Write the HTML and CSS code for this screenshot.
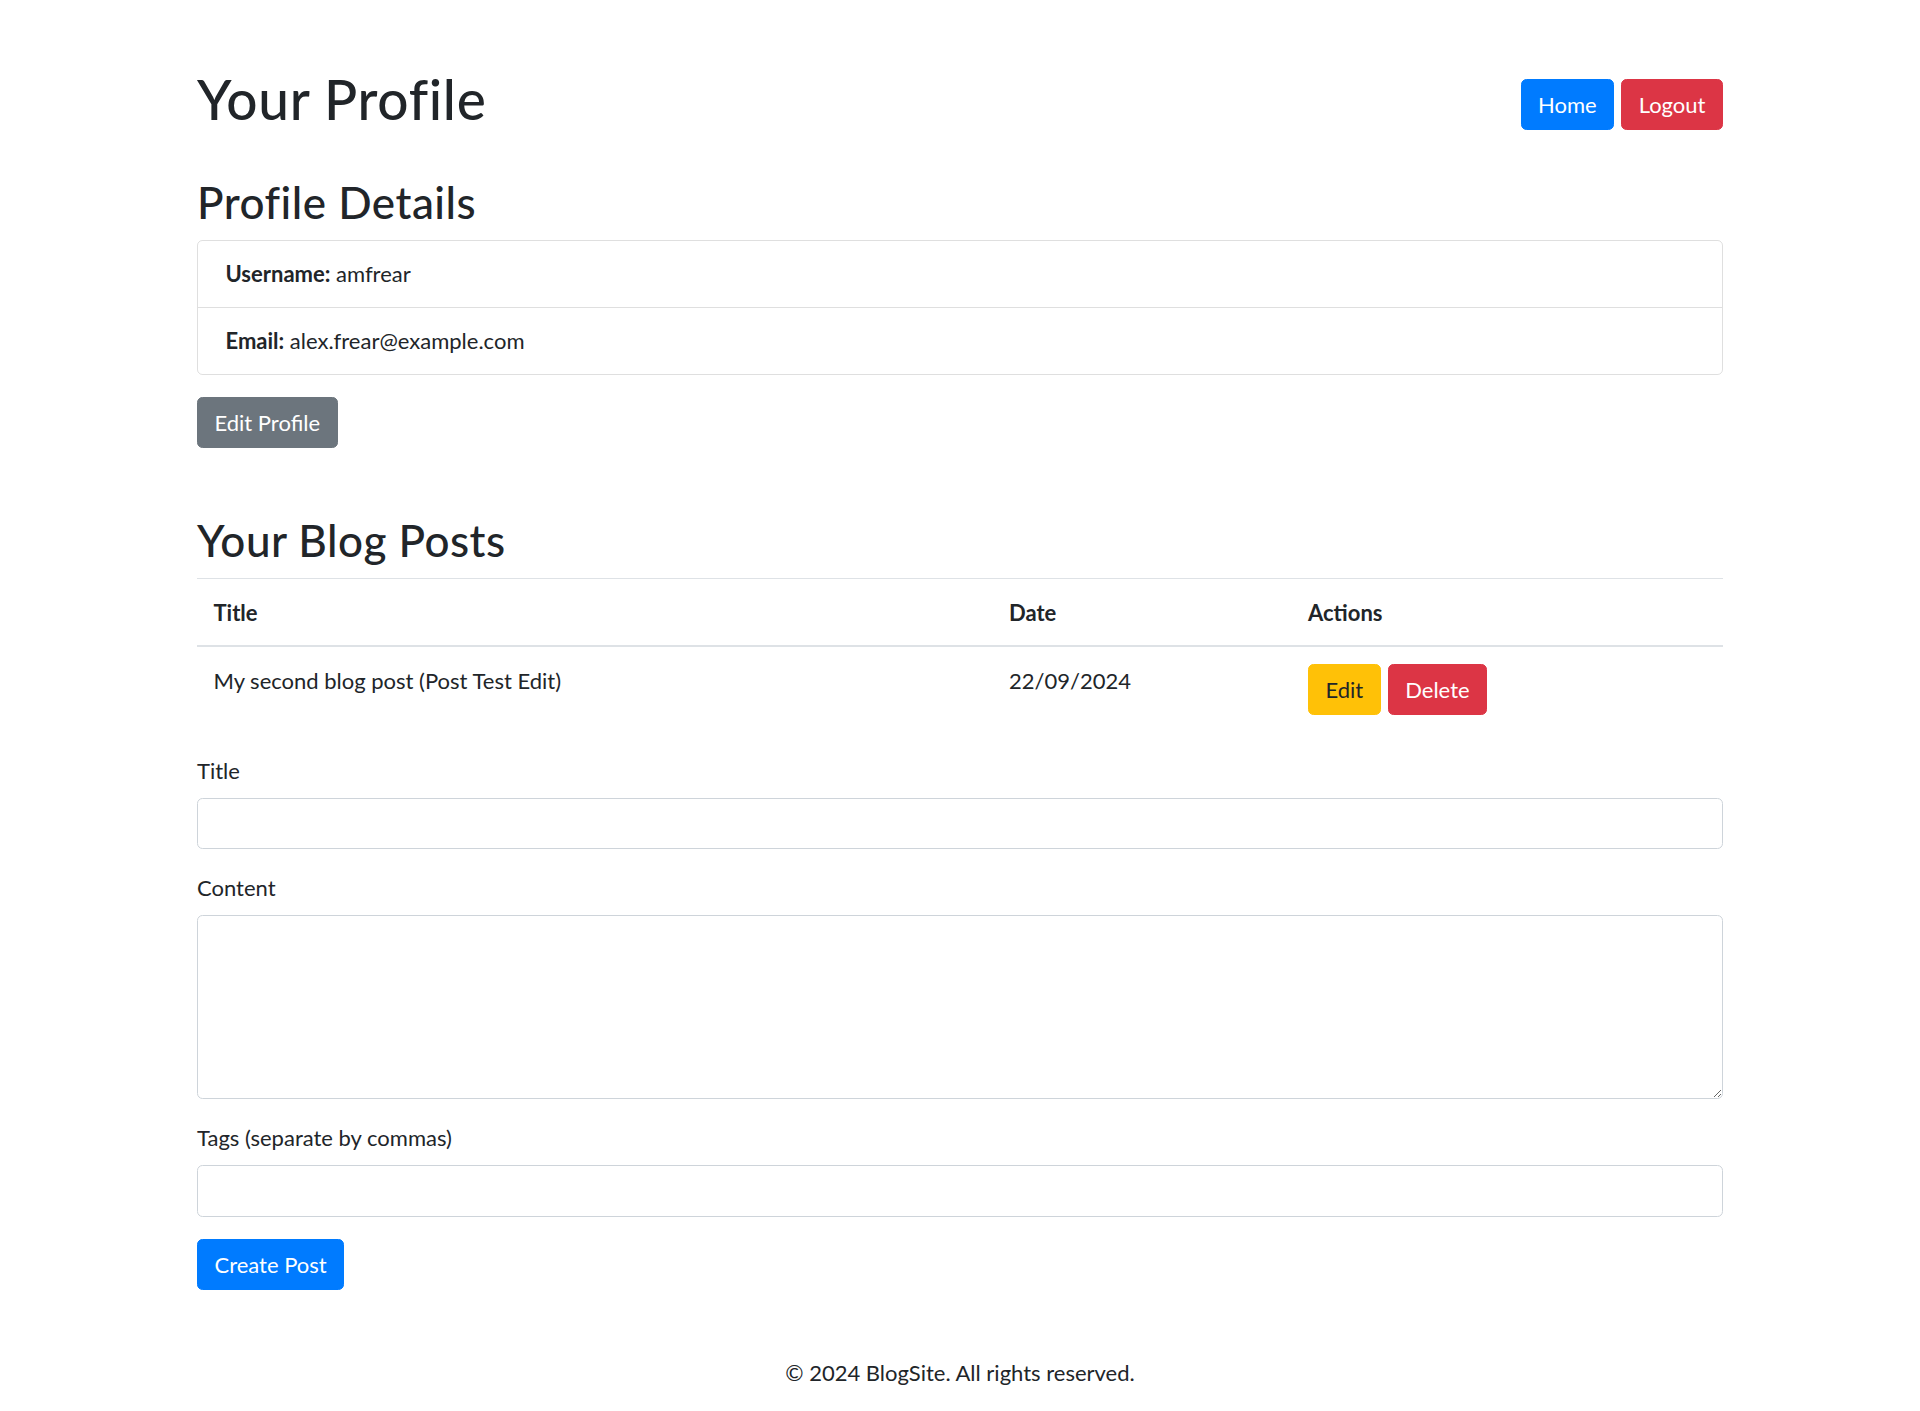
FILE: index.html
```html
<!DOCTYPE html>
<html lang="en">
<head>
<meta charset="utf-8">
<title>Your Profile</title>
<link rel="stylesheet" href="styles.css">
</head>
<body>
<div class="container">
  <div class="page-header">
    <h1 class="title">Your Profile</h1>
    <div class="nav-btns">
      <a class="btn btn-primary" href="#">Home</a>
      <a class="btn btn-danger" href="#">Logout</a>
    </div>
  </div>

  <h2 class="section-title">Profile Details</h2>
  <ul class="list-group">
    <li class="list-group-item"><strong>Username:</strong> amfrear</li>
    <li class="list-group-item"><strong>Email:</strong> alex.frear@example.com</li>
  </ul>
  <a class="btn btn-secondary" href="#">Edit Profile</a>

  <h2 class="section-title section-gap">Your Blog Posts</h2>
  <table class="table">
    <colgroup>
      <col class="col-title">
      <col class="col-date">
      <col class="col-actions">
    </colgroup>
    <thead>
      <tr><th>Title</th><th>Date</th><th>Actions</th></tr>
    </thead>
    <tbody>
      <tr>
        <td>My second blog post (Post Test Edit)</td>
        <td>22/09/2024</td>
        <td>
          <div class="row-actions">
            <a class="btn btn-warning" href="#">Edit</a>
            <button class="btn btn-danger" type="button">Delete</button>
          </div>
        </td>
      </tr>
    </tbody>
  </table>

  <form class="post-form">
    <div class="form-group">
      <label for="title">Title</label>
      <input id="title" class="form-control" type="text">
    </div>
    <div class="form-group">
      <label for="content">Content</label>
      <textarea id="content" class="form-control textarea"></textarea>
    </div>
    <div class="form-group">
      <label for="tags">Tags (separate by commas)</label>
      <input id="tags" class="form-control" type="text">
    </div>
    <button class="btn btn-primary" type="submit">Create Post</button>
  </form>
</div>

<footer class="footer">
  <p>© 2024 BlogSite. All rights reserved.</p>
</footer>
</body>
</html>
```
FILE: styles.css
```css
* { box-sizing: border-box; }

html, body {
  margin: 0;
  padding: 0;
}

body {
  font-family: "Lato", "Liberation Sans", sans-serif;
  font-size: 22px;
  line-height: 1.5;
  color: #212529;
  background: #fff;
}

.container {
  width: 1526px;
  margin: 66px auto 0;
}

.page-header {
  display: flex;
  justify-content: space-between;
  align-items: center;
  margin-bottom: 33px;
}

.title {
  font-size: 55px;
  font-weight: 500;
  line-height: 1.2;
  letter-spacing: 0.7px;
  margin: 0 0 11px;
}

.nav-btns {
  display: flex;
  gap: 7px;
}

.section-title {
  font-size: 44px;
  font-weight: 500;
  line-height: 1.2;
  letter-spacing: 0.5px;
  margin: 0 0 11px;
}

.section-gap {
  margin-top: 66px;
}

.btn {
  display: inline-block;
  font-family: inherit;
  font-size: 22px;
  line-height: 33px;
  font-weight: 400;
  padding: 8.25px 16.5px;
  border: 1px solid transparent;
  border-radius: 5.5px;
  text-decoration: none;
  cursor: pointer;
  vertical-align: middle;
  text-align: center;
}

.btn-primary { background: #007bff; border-color: #007bff; color: #fff; }
.btn-danger { background: #dc3545; border-color: #dc3545; color: #fff; }
.btn-secondary { background: #6c757d; border-color: #6c757d; color: #fff; }
.btn-warning { background: #ffc107; border-color: #ffc107; color: #212529; }

.list-group {
  list-style: none;
  margin: 0 0 22px;
  padding: 0;
  border: 1px solid rgba(0, 0, 0, 0.125);
  border-radius: 5.5px;
}

.list-group-item {
  padding: 16.5px 27.5px;
}

.list-group-item + .list-group-item {
  border-top: 1px solid rgba(0, 0, 0, 0.125);
}

.list-group-item strong {
  font-weight: 700;
}

.table {
  width: 100%;
  border-collapse: collapse;
  table-layout: fixed;
  margin-bottom: 22px;
}

.col-title { width: 795.5px; }
.col-date { width: 299px; }

.table th,
.table td {
  padding: 16.5px;
  border-top: 1px solid #dee2e6;
  vertical-align: top;
  text-align: left;
}

.table th {
  font-weight: 700;
}

.table thead th {
  vertical-align: bottom;
  border-bottom: 2px solid #dee2e6;
}

.row-actions {
  display: flex;
  gap: 7px;
}

.form-group {
  margin-bottom: 22px;
}

.form-group label {
  display: block;
  margin-bottom: 11px;
}

.form-control {
  display: block;
  width: 100%;
  height: 51.5px;
  padding: 8.25px 16.5px;
  font-family: inherit;
  font-size: 22px;
  line-height: 1.5;
  color: #495057;
  background: #fff;
  border: 1px solid #ced4da;
  border-radius: 5.5px;
  outline: none;
}

.textarea {
  height: 184px;
  resize: vertical;
}

.footer {
  margin-top: 66px;
  text-align: center;
}

.footer p {
  margin: 0 0 22px;
}
```
